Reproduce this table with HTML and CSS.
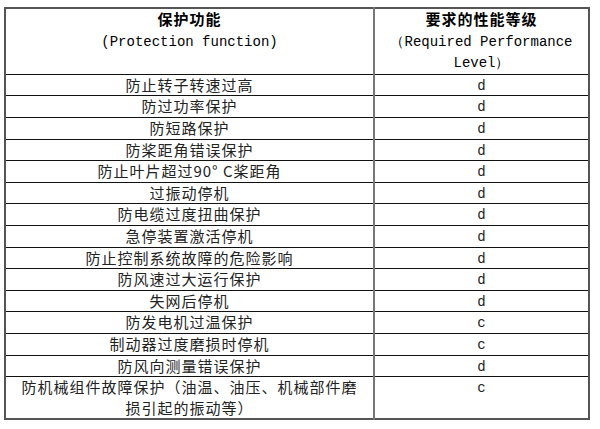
FILE: index.html
```html
<!DOCTYPE html>
<html lang="zh">
<head>
<meta charset="utf-8">
<title>保护功能</title>
<link rel="stylesheet" href="styles.css">
</head>
<body>
<table class="pl-table">
  <colgroup><col class="c1"><col class="c2"></colgroup>
  <thead>
    <tr>
      <th><span class="zh-b">保护功能</span><br><span class="en">(Protection function)</span></th>
      <th><span class="zh-b">要求的性能等级</span><br><span class="en">（Required Performance Level）</span></th>
    </tr>
  </thead>
  <tbody>
    <tr><td>防止转子转速过高</td><td class="lv">d</td></tr>
    <tr><td>防过功率保护</td><td class="lv">d</td></tr>
    <tr><td>防短路保护</td><td class="lv">d</td></tr>
    <tr><td>防桨距角错误保护</td><td class="lv">d</td></tr>
    <tr><td>防止叶片超过90°&nbsp;C桨距角</td><td class="lv">d</td></tr>
    <tr><td>过振动停机</td><td class="lv">d</td></tr>
    <tr><td>防电缆过度扭曲保护</td><td class="lv">d</td></tr>
    <tr><td>急停装置激活停机</td><td class="lv">d</td></tr>
    <tr><td>防止控制系统故障的危险影响</td><td class="lv">d</td></tr>
    <tr><td>防风速过大运行保护</td><td class="lv">d</td></tr>
    <tr><td>失网后停机</td><td class="lv">d</td></tr>
    <tr><td>防发电机过温保护</td><td class="lv">c</td></tr>
    <tr><td>制动器过度磨损时停机</td><td class="lv">c</td></tr>
    <tr><td>防风向测量错误保护</td><td class="lv">d</td></tr>
    <tr><td>防机械组件故障保护（油温、油压、机械部件磨损引起的振动等）</td><td class="lv">c</td></tr>
  </tbody>
</table>
</body>
</html>
```
FILE: styles.css
```css
html, body {
  margin: 0;
  padding: 0;
  background: #fff;
}
body {
  padding: 7px 0 0 4px;
}
.pl-table {
  border-collapse: collapse;
  width: 584px;
  table-layout: fixed;
  border: 2px solid #555;
  color: #111;
}
.c1 { width: 369px; }
.c2 { width: 215px; }
.pl-table th,
.pl-table td {
  padding: 0 8px;
  text-align: center;
  vertical-align: top;
  line-height: 20.6px;
  border-top: 1px solid #111;
  border-bottom: 1px solid #111;
}
.pl-table th:first-child,
.pl-table td:first-child {
  border-right: 2px solid #777;
}
.pl-table th {
  font-weight: normal;
  height: 62px;
  padding-top: 0;
}
.pl-table td {
  font-family: "Noto Sans CJK SC", "Noto Sans", sans-serif;
  font-size: 15px;
  letter-spacing: 1px;
  color: #222;
}
.zh-b {
  font-family: "Noto Sans CJK SC", sans-serif;
  font-weight: bold;
  font-size: 15px;
  letter-spacing: 1px;
  color: #000;
}
.en {
  font-family: "Liberation Mono", monospace;
  font-size: 14px;
  letter-spacing: 0;
  color: #000;
}
.pl-table td.lv {
  font-family: "Liberation Mono", monospace;
  font-size: 14px;
  letter-spacing: 0;
  line-height: 18.6px;
  padding-top: 2px;
}
```
